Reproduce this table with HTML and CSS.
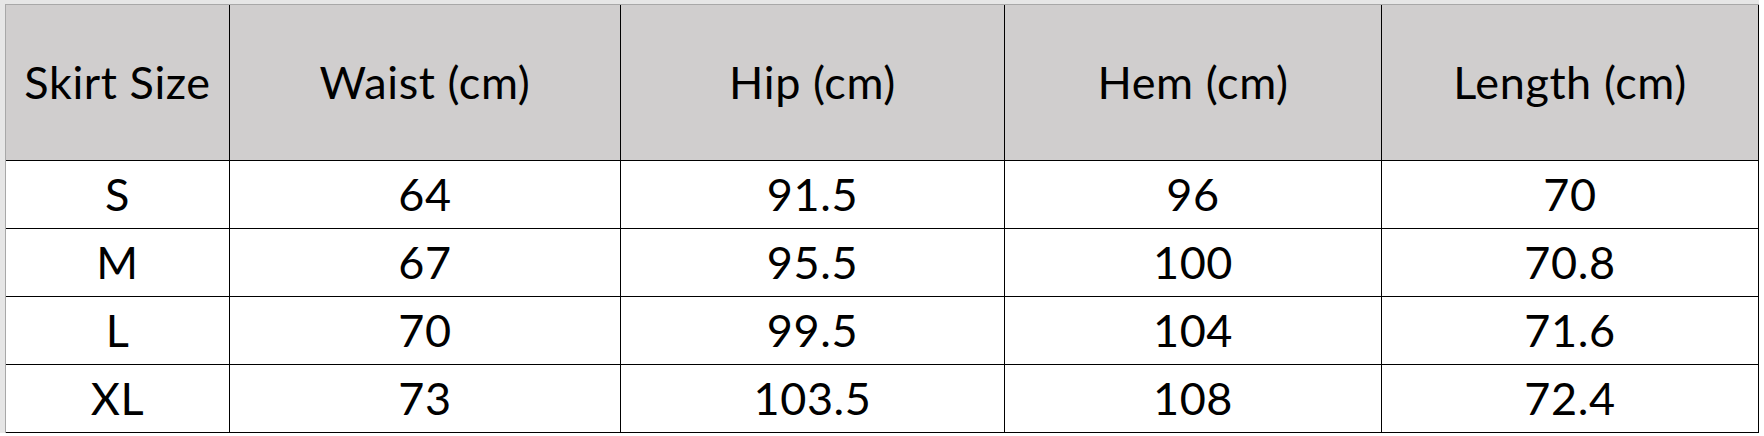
FILE: index.html
```html
<!DOCTYPE html>
<html>
<head>
<meta charset="utf-8">
<link rel="stylesheet" href="styles.css">
</head>
<body>
<div class="frame">
<table class="sizes">
<colgroup>
<col class="c1"><col class="c2"><col class="c3"><col class="c4"><col class="c5">
</colgroup>
<thead>
<tr class="head"><th>Skirt Size</th><th>Waist (cm)</th><th>Hip (cm)</th><th>Hem (cm)</th><th>Length (cm)</th></tr>
</thead>
<tbody>
<tr><td>S</td><td>64</td><td>91.5</td><td>96</td><td>70</td></tr>
<tr><td>M</td><td>67</td><td>95.5</td><td>100</td><td>70.8</td></tr>
<tr><td>L</td><td>70</td><td>99.5</td><td>104</td><td>71.6</td></tr>
<tr><td>XL</td><td>73</td><td>103.5</td><td>108</td><td>72.4</td></tr>
</tbody>
</table>
</div>
</body>
</html>
```

FILE: styles.css
```css
html, body {
  margin: 0;
  padding: 0;
  background: #ffffff;
}
.frame {
  border-top: 4px solid #e6e6e6;
  border-left: 5px solid #e6e6e6;
  width: max-content;
}
.sizes {
  border-collapse: separate;
  border-spacing: 0;
  table-layout: fixed;
  border-top: 1px solid #a8a8a8;
  border-left: 1px solid #a8a8a8;
  font-family: Lato, "Liberation Sans", sans-serif;
  font-size: 45px;
  letter-spacing: 0.6px;
  color: #000;
}
.c1 { width: 224px; }
.c2 { width: 391px; }
.c3 { width: 384px; }
.c4 { width: 377px; }
.c5 { width: 377px; }
.sizes th, .sizes td {
  box-sizing: border-box;
  padding: 0;
  text-align: center;
  vertical-align: middle;
  border-right: 1px solid #000;
  border-bottom: 1px solid #000;
  font-weight: normal;
  line-height: 1;
}
.head th {
  background: #d0cece;
  height: 156px;
}
.sizes td {
  height: 68px;
}
```
